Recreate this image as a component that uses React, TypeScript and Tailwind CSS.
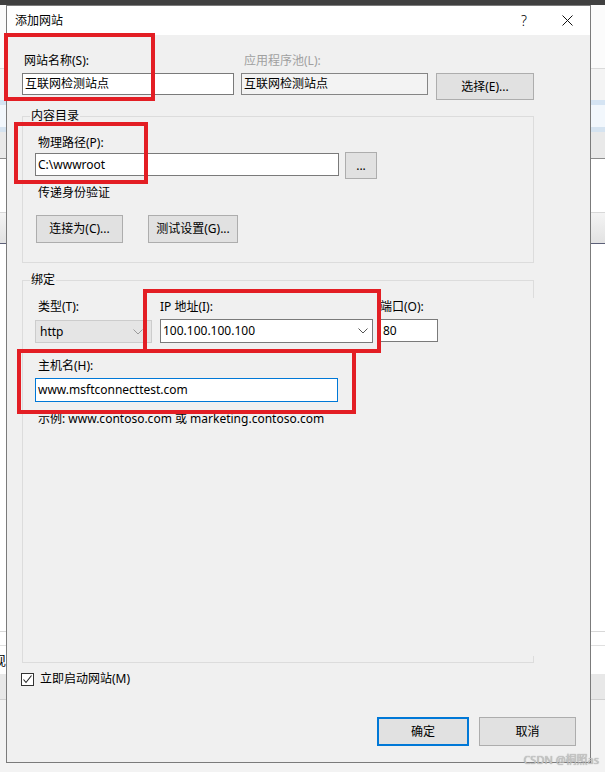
import React from 'react';

// Win10 style "添加网站" dialog over a background window

const Btn = ({ children, className = '' }: { children: React.ReactNode; className?: string }) => (
  <div className={`flex items-center justify-center bg-[#e1e1e1] border border-[#adadad] ${className}`}>{children}</div>
);

const Box = ({ children, className = '' }: { children?: React.ReactNode; className?: string }) => (
  <div className={`flex items-center pl-[2px] border ${className}`}>{children}</div>
);

const Chevron = ({ color }: { color: string }) => (
  <svg width="10" height="6" viewBox="0 0 10 6" className="shrink-0">
    <polyline points="0.5,0.5 5,5 9.5,0.5" fill="none" stroke={color} strokeWidth="1" />
  </svg>
);

export default function App() {
  return (
    <div className="relative w-[605px] h-[772px] overflow-hidden font-['Noto_Sans','Noto_Sans_CJK_SC',sans-serif] text-[12px] leading-[16px] text-black">
      {/* background app behind the dialog */}
      <div className="flex flex-col">
        <div className="h-[5px] bg-[#404040]" />
        <div className="h-[63px] bg-[#fbfbfb]" />
        <div className="h-[1px] bg-[#dadada]" />
        <div className="h-[31px] bg-[#f4f4f4]" />
        <div className="h-[5px] bg-[#d5e4f3]" />
        <div className="h-[22px] bg-[#f2f7fc]" />
        <div className="h-[5px] bg-[#d5e3f0]" />
        <div className="h-[26px] bg-[#e9e9e9]" />
        <div className="h-[1px] bg-[#8c8c8c]" />
        <div className="h-[53px] bg-white" />
        <div className="h-[1px] bg-[#d8d8d8]" />
        <div className="h-[30px] bg-gradient-to-b from-[#f4f4f4] to-[#e2e2e2]" />
        <div className="h-[1px] bg-[#5c6078]" />
        <div className="h-[387px] bg-white" />
        <div className="h-[1px] bg-[#d8d8d8]" />
        <div className="h-[13px] bg-white" />
        <div className="h-[1px] bg-[#e0e0e0]" />
        <div className="h-[28px] bg-white flex items-center">
          <span className="-ml-[7px] text-[13px]">现</span>
        </div>
        <div className="h-[25px] bg-[#e8e8e8]" />
        <div className="h-[1px] bg-[#d0d0d0]" />
        <div className="h-[72px] bg-[#f3f3f3]" />
      </div>

      {/* dialog window */}
      <div className="absolute left-[6px] top-[5px] w-[585px] h-[758px] border border-[#7b7b7b] flex flex-col bg-[#f0f0f0]">
        {/* title bar */}
        <div className="h-[29px] shrink-0 bg-white flex items-center pl-[8px]">
          <span>添加网站</span>
          <span className="ml-auto text-[14px] font-light">?</span>
          <svg width="11" height="11" viewBox="0 0 11 11" className="ml-[35px] mr-[17px]">
            <path d="M0.5 0.5 L10.5 10.5 M10.5 0.5 L0.5 10.5" stroke="#111" strokeWidth="1" />
          </svg>
        </div>

        <div className="flex-1 flex flex-col">
          {/* site name / app pool */}
          <div className="flex pt-[18px] pl-[15px]">
            <div className="flex flex-col w-[212px]">
              <span className="pl-[2px]">网站名称(S):</span>
              <Box className="mt-[4px] h-[22px] bg-white border-[#7a7a7a]">互联网检测站点</Box>
            </div>
            <div className="flex flex-col w-[187px] ml-[7px]">
              <span className="pl-[3px] text-[#a0a0a0]">应用程序池(L):</span>
              <Box className="mt-[4px] h-[22px] bg-[#f3f3f3] border-[#858585]">互联网检测站点</Box>
            </div>
            <div className="ml-[8px] pt-[20px]">
              <Btn className="w-[98px] h-[27px]">选择(E)...</Btn>
            </div>
          </div>

          {/* 内容目录 */}
          <div className="relative mt-[16px] ml-[15px] w-[512px] h-[147px] border border-[#dcdcdc] pt-[18px] pl-[12px]">
            <span className="absolute -top-[9px] left-[7px] px-[1px] bg-[#f0f0f0]">内容目录</span>
            <div className="ml-[3px]">物理路径(P):</div>
            <div className="flex items-start mt-[1px]">
              <Box className="mt-[1px] w-[304px] h-[23px] bg-white border-[#7a7a7a]">C:\wwwroot</Box>
              <Btn className="ml-[6px] w-[32px] h-[27px]">...</Btn>
            </div>
            <div className="ml-[3px] mt-[6px]">传递身份验证</div>
            <div className="flex mt-[14px]">
              <Btn className="ml-[1px] w-[87px] h-[28px]">连接为(C)...</Btn>
              <Btn className="ml-[25px] w-[90px] h-[28px]">测试设置(G)...</Btn>
            </div>
          </div>

          {/* 绑定 */}
          <div className="relative mt-[17px] ml-[15px] w-[512px] h-[383px] border-l border-t border-b border-[#dcdcdc] pt-[18px] pl-[12px]">
            <span className="absolute -top-[9px] left-[7px] px-[1px] bg-[#f0f0f0]">绑定</span>
            <div className="absolute top-0 right-0 w-[1px] h-[17px] bg-[#dcdcdc]" />
            <div className="absolute bottom-0 right-0 w-[1px] h-[6px] bg-[#dcdcdc]" />
            <div className="flex">
              <div className="flex flex-col w-[117px]">
                <span className="ml-[3px]">类型(T):</span>
                <div className="mt-[5px] h-[23px] flex items-center justify-between pl-[4px] pr-[8px] bg-[#e5e5e5] border border-[#cccccc]">
                  <span>http</span>
                  <Chevron color="#9a9a9a" />
                </div>
              </div>
              <div className="flex flex-col w-[213px] ml-[8px]">
                <span>IP 地址(I):</span>
                <div className="mt-[4px] h-[24px] flex items-center justify-between pl-[2px] pr-[4px] bg-white border border-[#7a7a7a]">
                  <span>100.100.100.100</span>
                  <Chevron color="#555555" />
                </div>
              </div>
              <div className="flex flex-col w-[58px] ml-[7px]">
                <span>端口(O):</span>
                <Box className="mt-[4px] h-[23px] bg-white border-[#7a7a7a]">80</Box>
              </div>
            </div>
            <div className="ml-[3px] mt-[15px]">主机名(H):</div>
            <Box className="mt-[4px] w-[303px] h-[24px] bg-white border-[#0078d7]">www.msftconnecttest.com</Box>
            <div className="ml-[3px] mt-[9px]">示例: www.contoso.com 或 marketing.contoso.com</div>
          </div>

          {/* start now */}
          <div className="flex items-center h-[16px] mt-[8px] ml-[14px]">
            <div className="w-[13px] h-[13px] border border-[#333333] bg-white flex items-center justify-center">
              <svg width="11" height="11" viewBox="0 0 11 11">
                <polyline points="1.5,5.5 4,8.5 9.5,1.5" fill="none" stroke="#222" strokeWidth="1.1" />
              </svg>
            </div>
            <span className="ml-[6px]">立即启动网站(M)</span>
          </div>

          {/* dialog buttons */}
          <div className="flex justify-end mt-[30px] pr-[14px]">
            <div className="w-[92px] h-[29px] flex items-center justify-center bg-[#e1e1e1] border-2 border-[#0078d7]">确定</div>
            <Btn className="ml-[10px] w-[97px] h-[29px]">取消</Btn>
          </div>
        </div>
      </div>

      {/* red annotation boxes */}
      <div className="absolute left-[4px] top-[33px] w-[151px] h-[68px] border-[4px] border-[#e31e24]" />
      <div className="absolute left-[14px] top-[122px] w-[134px] h-[62px] border-[4px] border-[#e31e24]" />
      <div className="absolute left-[143px] top-[289px] w-[238px] h-[64px] border-[4px] border-[#e31e24]" />
      <div className="absolute left-[17px] top-[349px] w-[339px] h-[65px] border-[4px] border-[#e31e24]" />

      {/* watermark */}
      <span className="absolute right-[6px] bottom-[6px] text-[11px] leading-[12px] text-[#c8c8c8] [text-shadow:0_0_1px_#888]">CSDN @桐照as</span>
    </div>
  );
}
